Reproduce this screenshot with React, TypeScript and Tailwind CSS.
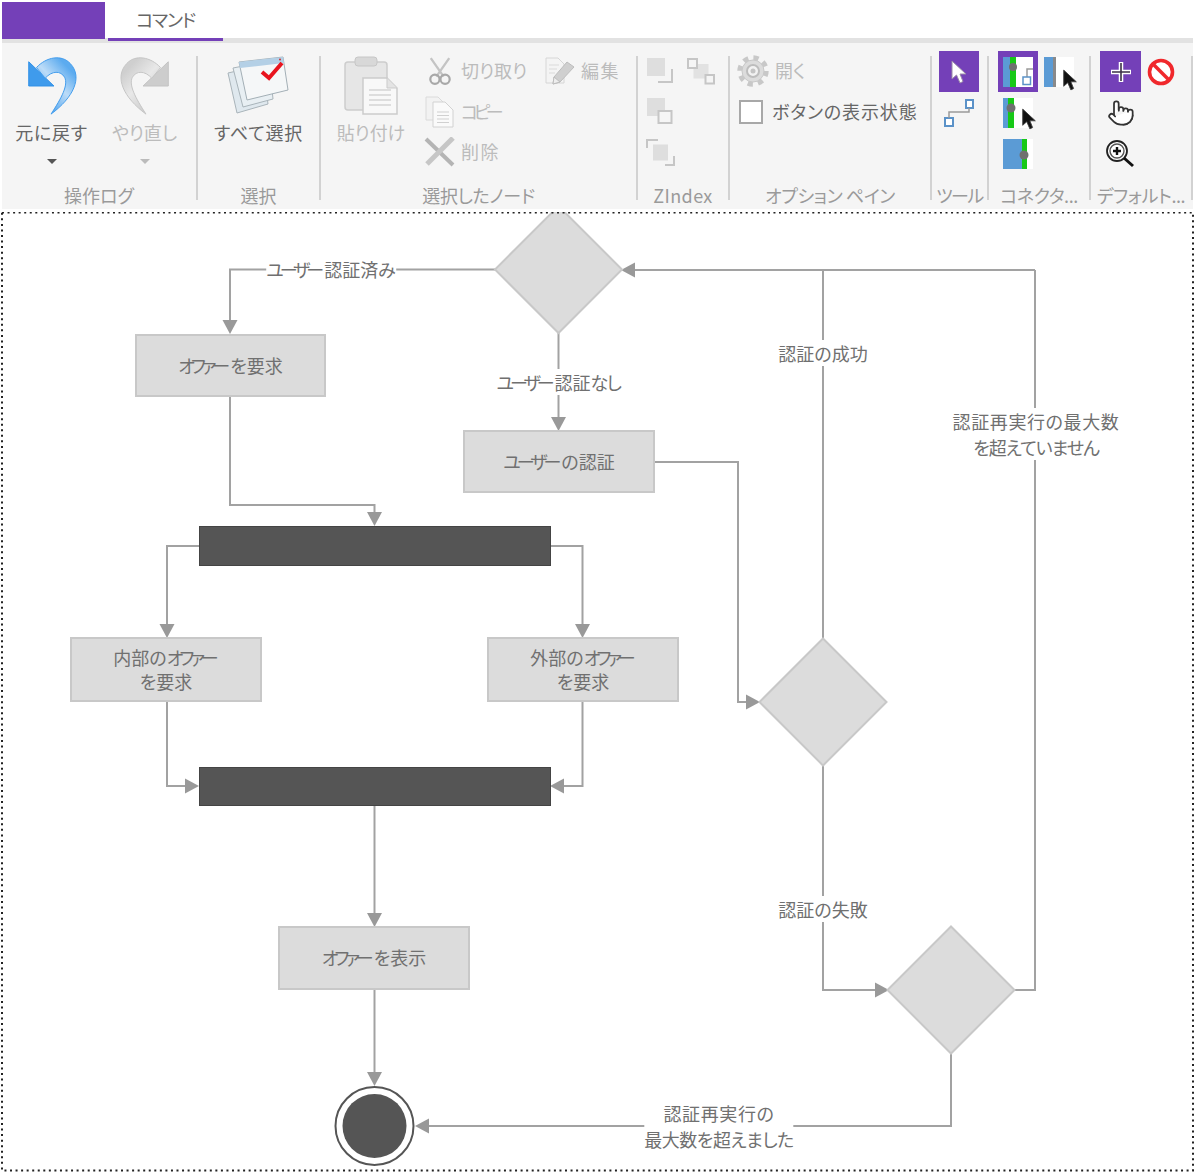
import type { ReactNode } from "react";
import { Pointer } from "lucide-react";

const PURPLE = "bg-[#7440b8]";

function Sep() {
  return <div className="w-[2px] h-[144px] mt-[13px] bg-[#d2d2d2] shrink-0" />;
}

function Group({ label, className, labelClass = "", children }: { label: string; className: string; labelClass?: string; children: ReactNode }) {
  return (
    <div className={`flex flex-col shrink-0 ${className}`}>
      <div className="flex-1 min-h-0">{children}</div>
      <div className={`h-[28px] leading-[28px] text-[18px] text-[#9a9a9a] text-center whitespace-nowrap overflow-hidden ${labelClass}`}>{label}</div>
    </div>
  );
}

function Arc({ gray }: { gray?: boolean }) {
  const id = gray ? "arcGray" : "arcBlue";
  return (
    <svg width="60" height="64" viewBox="-2 0 60 66" className={gray ? "-scale-x-100" : ""}>
      <defs>
        <linearGradient id={id} x1="0.1" y1="0.9" x2="0.7" y2="0.1">
          <stop offset="0" stopColor={gray ? "#c4c4c4" : "#3b98ea"} />
          <stop offset="0.6" stopColor={gray ? "#e8e8e8" : "#bcdcf8"} />
          <stop offset="1" stopColor={gray ? "#cfcfcf" : "#5cabef"} />
        </linearGradient>
      </defs>
      <path d="M4 8 V33 H30 Z" fill={gray ? "#cdcdcd" : "#3f9bec"} stroke={gray ? "#c2c2c2" : "#2f8fe6"} />
      <path
        d="M12 14 C22 3 38 0 47 10 C60 24 50 45 27 62 C38 45 45 32 41 24 C37 17 28 17 21 25 Z"
        fill={`url(#${id})`}
        stroke={gray ? "#c4c4c4" : "#3f9bec"}
      />
    </svg>
  );
}

function SelectAllIcon() {
  return (
    <svg width="64" height="64" viewBox="2 0 64 64">
      <polygon points="3,19 38,11 43,50 12,59" fill="#dfe8ee" stroke="#a9b4ba" />
      <polygon points="8,14 44,7 48,45 18,53" fill="#e8eff3" stroke="#a9b4ba" />
      <polygon points="14,8 58,3 63,36 22,46" fill="#f5f7f8" stroke="#a3afb6" />
      <polygon points="14,8 58,3 59,9 15,14" fill="#b4d0e6" />
      <circle cx="55" cy="5.5" r="1" fill="#c33" />
      <path d="M37 18 L44 24 L57 9" fill="none" stroke="#e8141e" strokeWidth="4" />
    </svg>
  );
}

function PasteIcon() {
  return (
    <svg width="56" height="64" viewBox="0 0 56 64">
      <rect x="2" y="8" width="42" height="48" rx="3" fill="#e6e6e6" stroke="#cdcdcd" strokeWidth="1.5" />
      <rect x="12" y="3" width="22" height="9" rx="3" fill="#d8d8d8" stroke="#c6c6c6" />
      <path d="M20 24 H44 L54 34 V60 H20 Z" fill="#f8f8f8" stroke="#cbcbcb" strokeWidth="1.5" />
      <path d="M44 24 V34 H54" fill="#e4e4e4" stroke="#cbcbcb" />
      <path d="M26 36 H48 M26 41 H48 M26 46 H48 M26 51 H48" stroke="#d4d4d4" strokeWidth="1.5" />
    </svg>
  );
}

function CutIcon() {
  return (
    <svg width="24" height="32" viewBox="0 0 26 32" className="-ml-[3px]">
      <path d="M3 2 L17 22 M23 2 L9 22" stroke="#c4c4c4" strokeWidth="2.5" fill="none" />
      <circle cx="7.5" cy="25" r="5" fill="none" stroke="#a8a8a8" strokeWidth="2.4" />
      <circle cx="18.5" cy="25" r="5" fill="none" stroke="#a8a8a8" strokeWidth="2.4" />
    </svg>
  );
}

function CopyIcon() {
  return (
    <svg width="30" height="32" viewBox="0 0 30 32" className="-ml-[3px]">
      <path d="M1 1 H13 L19 7 V24 H1 Z" fill="#f2f2f2" stroke="#dadada" />
      <path d="M8 6 H20 L28 14 V31 H8 Z" fill="#fafafa" stroke="#d2d2d2" />
      <path d="M12 16 H24 M12 19.5 H24 M12 23 H24 M12 26.5 H24" stroke="#d0d0d0" />
    </svg>
  );
}

function DeleteIcon() {
  return (
    <svg width="32" height="30" viewBox="0 0 32 30" className="-ml-[3px]">
      <path d="M2 2 L29 28" stroke="#b4b4b4" strokeWidth="4" />
      <path d="M29 1 L3 27" stroke="#c6c6c6" strokeWidth="5" />
    </svg>
  );
}

function EditIcon() {
  return (
    <svg width="30" height="30" viewBox="0 0 30 30" className="-ml-[3px]">
      <path d="M1 2 H13 L19 8 V27 H1 Z" fill="#f4f4f4" stroke="#d6d6d6" />
      <path d="M4 9 H14 M4 13 H12 M4 17 H10" stroke="#dadada" />
      <path d="M9 21 L22 6 L29 11 L15 26 L8 28 Z" fill="#cfcfcf" stroke="#bdbdbd" />
      <path d="M9 21 L15 26 L8 28 Z" fill="#eeeeee" stroke="#bdbdbd" />
    </svg>
  );
}

function ZIcon({ n }: { n: number }) {
  const line = { fill: "none", stroke: "#c6c6c6", strokeWidth: 2 };
  return (
    <svg width="40" height="40" viewBox="0 0 40 40">
      {n === 1 && (
        <>
          <rect x="8" y="8" width="18" height="18" fill="#dedede" />
          <path d="M19 32 H33 V19" {...line} />
        </>
      )}
      {n === 2 && (
        <>
          <rect x="12.5" y="14" width="15" height="14.5" fill="#e2e2e2" />
          <rect x="7" y="9" width="9" height="9" fill="#f5f5f5" stroke="#c6c6c6" strokeWidth="2" />
          <rect x="24.5" y="25" width="8.5" height="8.5" fill="#f5f5f5" stroke="#c6c6c6" strokeWidth="2" />
        </>
      )}
      {n === 3 && (
        <>
          <rect x="8" y="7" width="18" height="18" fill="#dedede" />
          <rect x="19.5" y="20" width="13" height="12" fill="#f5f5f5" stroke="#c6c6c6" strokeWidth="2" />
        </>
      )}
      {n === 4 && (
        <>
          <path d="M8 16 V8 H19" {...line} />
          <rect x="14" y="12.5" width="15" height="16" fill="#dedede" />
          <path d="M26 33 H35 V24" {...line} />
        </>
      )}
    </svg>
  );
}

function GearIcon() {
  return (
    <svg width="32" height="32" viewBox="0 0 32 32">
      <circle cx="16" cy="16" r="13.2" fill="none" stroke="#c8c8c8" strokeWidth="5" strokeDasharray="5.2 5.17" />
      <circle cx="16" cy="16" r="11" fill="#dcdcdc" stroke="#c8c8c8" />
      <circle cx="16" cy="16" r="6" fill="#f2f2f2" stroke="#bdbdbd" strokeWidth="2" />
      <circle cx="16" cy="16" r="2.5" fill="#c4c4c4" />
    </svg>
  );
}

function Cursor({ light }: { light?: boolean }) {
  return (
    <svg width="20" height="24" viewBox="0 0 20 24">
      <path
        d="M3 1 V19 L7.5 15 L11 23 L14 21.5 L11 14 H17 Z"
        fill={light ? "#ffffff" : "#111111"}
        stroke={light ? "#9a8aa8" : "#444444"}
        strokeWidth="1"
      />
    </svg>
  );
}

function ConnectorToolIcon() {
  return (
    <svg width="32" height="32" viewBox="0 0 32 32">
      <rect x="2" y="21" width="8" height="8" fill="#ffffff" stroke="#5b92c8" strokeWidth="2" />
      <rect x="23" y="3" width="7" height="8" fill="#ffffff" stroke="#5b92c8" strokeWidth="2" />
      <path d="M6 21 V15 H26 V11" fill="none" stroke="#9a9a9a" strokeWidth="1.5" />
    </svg>
  );
}

function ConnA() {
  return (
    <svg width="30" height="30" viewBox="0 0 30 30">
      <rect width="30" height="30" fill="#ffffff" />
      <rect width="7" height="30" fill="#5b9bd5" />
      <rect x="7" width="6" height="30" fill="#17c917" />
      <circle cx="10" cy="10" r="4" fill="#707070" />
      <path d="M24 20 V12 H30" fill="none" stroke="#9a9a9a" strokeWidth="1.5" />
      <rect x="20" y="20" width="7.5" height="7.5" fill="#ffffff" stroke="#5b92c8" strokeWidth="1.5" />
    </svg>
  );
}

function ConnB() {
  return (
    <div className="relative w-[30px] h-[30px] flex bg-white">
      <div className="w-[9px] bg-[#5b9bd5]" />
      <div className="w-[3px] bg-[#8a8a8a]" />
      <div className="absolute left-[16px] top-[11px] scale-90">
        <Cursor />
      </div>
    </div>
  );
}

function ConnC() {
  return (
    <div className="relative w-[30px] h-[30px] bg-white">
      <svg width="30" height="30" viewBox="0 0 30 30" className="absolute left-0 top-0">
        <rect width="5" height="30" fill="#5b9bd5" />
        <rect x="5" width="6" height="30" fill="#17c917" />
        <circle cx="8" cy="10" r="4.5" fill="#707070" />
      </svg>
      <div className="absolute left-[16px] top-[9px] scale-90">
        <Cursor />
      </div>
    </div>
  );
}

function ConnD() {
  return (
    <svg width="30" height="30" viewBox="0 0 30 30">
      <rect width="30" height="30" fill="#ffffff" />
      <rect width="19" height="30" fill="#5b9bd5" />
      <rect x="19" width="5" height="30" fill="#17c917" />
      <circle cx="21" cy="16" r="4.5" fill="#707070" />
    </svg>
  );
}

function PlusIcon() {
  return (
    <svg width="24" height="24" viewBox="0 0 24 24">
      <path d="M12 2 V22 M2 12 H22" stroke="#ffffff" strokeWidth="4.5" />
      <path d="M12 3 V21 M3 12 H21" stroke="#3c3048" strokeWidth="1.6" />
    </svg>
  );
}

function NoIcon() {
  return (
    <svg width="28" height="28" viewBox="0 0 28 28">
      <circle cx="14" cy="14" r="11.5" fill="#ffffff" stroke="#f0282c" strokeWidth="3.6" />
      <path d="M6 6 L22 22" stroke="#f0282c" strokeWidth="3.6" />
    </svg>
  );
}

function ZoomIcon() {
  return (
    <svg width="30" height="30" viewBox="0 0 30 30" className="-ml-[2px]">
      <circle cx="12" cy="12" r="10" fill="#ffffff" stroke="#222222" strokeWidth="1.8" />
      <circle cx="12" cy="12" r="7" fill="#ffffff" stroke="#555555" strokeWidth="1.4" />
      <path d="M12 8 V16 M8 12 H16" stroke="#111111" strokeWidth="2.4" />
      <path d="M19 19 L28 27" stroke="#111111" strokeWidth="3" />
    </svg>
  );
}

function IconCell({ active, children, className = "w-[40px]" }: { active?: boolean; children: ReactNode; className?: string }) {
  return (
    <div className={`h-[41px] flex items-center justify-center shrink-0 ${className} ${active ? PURPLE : ""}`}>{children}</div>
  );
}

function Caret({ gray }: { gray?: boolean }) {
  return <div className={`w-0 h-0 border-x-[5px] border-x-transparent border-t-[5px] ${gray ? "border-t-[#bbbbbb]" : "border-t-[#555555]"}`} />;
}

function LargeButton({ icon, text, gray, caret, width, textClass = "" }: { icon: ReactNode; text: string; gray?: boolean; caret?: boolean; width: string; textClass?: string }) {
  return (
    <div className={`flex flex-col items-center pt-[11px] ${width}`}>
      <div className="h-[64px] flex items-center justify-center">{icon}</div>
      <div className={`mt-[1px] h-[26px] leading-[26px] text-[18px] whitespace-nowrap ${textClass} ${gray ? "text-[#bcbcbc]" : "text-[#666666]"}`}>{text}</div>
      {caret && (
        <div className="mt-[14px]">
          <Caret gray={gray} />
        </div>
      )}
    </div>
  );
}

function SmallAction({ icon, text, className, textClass = "" }: { icon: ReactNode; text: string; className: string; textClass?: string }) {
  return (
    <div className={`h-[41px] flex items-center ${className}`}>
      <div className="w-[39px] flex justify-center shrink-0">{icon}</div>
      <span className={`text-[18px] leading-[26px] pb-[2px] text-[#bcbcbc] whitespace-nowrap ${textClass}`}>{text}</span>
    </div>
  );
}

function Ribbon() {
  return (
    <div className="ml-[2px] w-[1191px] h-[212px] bg-white">
      <div className="flex h-[38px] pt-[2px]">
        <div className={`w-[103px] h-[37px] ${PURPLE}`} />
        <div className="ml-[3px] w-[115px] h-[34px] leading-[34px] text-center text-[18px] tracking-[-1.2px] text-[#666666]">コマンド</div>
      </div>
      <div className="h-[5px] bg-[#e2e2e2]">
        <div className={`ml-[106px] w-[115px] h-[3px] ${PURPLE}`} />
      </div>
      <div className="flex h-[166px] bg-[#f5f5f5]">
        <Group label="操作ログ" className="w-[194px]">
          <div className="flex pl-[3px]">
            <LargeButton width="w-[93px]" icon={<Arc />} text="元に戻す" textClass="tracking-[0.7px]" caret />
            <LargeButton width="w-[93px]" icon={<Arc gray />} text="やり直し" gray caret />
          </div>
        </Group>
        <Sep />
        <Group label="選択" className="w-[121px]">
          <LargeButton width="w-full" icon={<SelectAllIcon />} text="すべて選択" textClass="tracking-[0.8px]" />
        </Group>
        <Sep />
        <Group label="選択したノード" className="w-[315px]" labelClass="tracking-[-0.3px]">
          <div className="flex pl-[5px]">
            <LargeButton width="w-[90px]" icon={<PasteIcon />} text="貼り付け" gray />
            <div className="pt-[7px] ml-[6px]">
              <div className="flex">
                <SmallAction icon={<CutIcon />} text="切り取り" className="w-[120px]" />
                <SmallAction icon={<EditIcon />} text="編集" className="w-[80px]" textClass="tracking-[1.5px]" />
              </div>
              <SmallAction icon={<CopyIcon />} text="コピー" className="w-[120px]" textClass="tracking-[-4.5px]" />
              <SmallAction icon={<DeleteIcon />} text="削除" className="w-[120px] -mt-[1px]" textClass="tracking-[1.5px]" />
            </div>
          </div>
        </Group>
        <Sep />
        <Group label="ZIndex" className="w-[90px]" labelClass="tracking-[0.4px]">
          <div className="grid grid-cols-[42px_42px] pl-[1px] pt-[6px]">
            <IconCell><ZIcon n={1} /></IconCell>
            <IconCell><ZIcon n={2} /></IconCell>
            <IconCell><ZIcon n={3} /></IconCell>
            <div />
            <IconCell><ZIcon n={4} /></IconCell>
          </div>
        </Group>
        <Sep />
        <Group label="オプション ペイン" className="w-[200px]" labelClass="tracking-[-0.4px]">
          <div className="pt-[7px] pl-[7px]">
            <div className="h-[41px] flex items-center gap-[6px]">
              <GearIcon />
              <span className="text-[18px] leading-[26px] pb-[2px] text-[#bcbcbc]">開く</span>
            </div>
            <div className="h-[41px] flex items-center gap-[9px] ml-[2px]">
              <div className="w-[24px] h-[24px] bg-white border-2 border-[#a8a8a8]" />
              <span className="text-[18px] leading-[26px] pb-[2px] tracking-[0.9px] text-[#666666] whitespace-nowrap">ボタンの表示状態</span>
            </div>
          </div>
        </Group>
        <Sep />
        <Group label="ツール" className="w-[55px]" labelClass="tracking-[-1.5px]">
          <div className="pt-[8px] pl-[7px]">
            <IconCell active><Cursor light /></IconCell>
            <IconCell><ConnectorToolIcon /></IconCell>
          </div>
        </Group>
        <Sep />
        <Group label="コネクタ..." className="w-[100px]" labelClass="tracking-[-0.4px]">
          <div className="pt-[8px] pl-[9px]">
            <div className="flex">
              <IconCell active><ConnA /></IconCell>
              <div className="w-[6px]" />
              <IconCell className="w-[30px]"><ConnB /></IconCell>
            </div>
            <IconCell><ConnC /></IconCell>
            <IconCell><ConnD /></IconCell>
          </div>
        </Group>
        <Sep />
        <Group label="デフォルト..." className="w-[100px]" labelClass="tracking-[-0.4px]">
          <div className="pt-[8px] pl-[9px]">
            <div className="flex">
              <IconCell active className="w-[41px]"><PlusIcon /></IconCell>
              <IconCell><NoIcon /></IconCell>
            </div>
            <IconCell className="w-[41px]">
              <Pointer size={28} color="#333333" fill="#ffffff" strokeWidth={1.5} />
            </IconCell>
            <IconCell className="w-[41px]"><ZoomIcon /></IconCell>
          </div>
        </Group>
        <Sep />
      </div>
    </div>
  );
}

const EDGES = [
  "M495 269.5 H230 V324",
  "M558.5 332 V421",
  "M230 396 V505 H374.5 V516",
  "M199 546 H167 V628",
  "M550 546 H582.5 V628",
  "M654 462 H738 V702 H750",
  "M167 701 V786 H189",
  "M582.5 701 V786 H560",
  "M374.5 805 V917",
  "M374.5 989 V1076",
  "M823 639 V270",
  "M1035 270 H631",
  "M1013 990 H1035 V270",
  "M823 765 V990 H879",
  "M951 1053 V1126 H425",
];

const ARROWS = [
  "230,334 222.5,320 237.5,320",
  "558.5,431 551,417 566,417",
  "374.5,526 367,512 382,512",
  "167,638 159.5,624 174.5,624",
  "582.5,638 575,624 590,624",
  "374.5,927 367,913 382,913",
  "374.5,1086 367,1072 382,1072",
  "760,702 746,694.5 746,709.5",
  "199,786 185,778.5 185,793.5",
  "889,990 875,982.5 875,997.5",
  "550,786 564,778.5 564,793.5",
  "621,270 635,262.5 635,277.5",
  "415,1126 429,1118.5 429,1133.5",
];

const DIAMONDS = [
  [558.5, 269.5],
  [823, 702],
  [951, 990],
];

// Meiryo UI sets kana narrow; Noto needs them pulled in. The closing ー stays outside so it doesn't run into the next kanji.
function Kana({ children }: { children: ReactNode }) {
  return <span className="tracking-[-4px]">{children}</span>;
}

function Node({ className, children }: { className: string; children: ReactNode }) {
  return (
    <div
      className={`absolute flex items-center justify-center pb-[2px] text-center text-[18px] leading-[24px] text-[#707070] bg-[#dcdcdc] border-2 border-[#c8c8c8] ${className}`}
    >
      <div>{children}</div>
    </div>
  );
}

function EdgeLabel({ className, children }: { className: string; children: ReactNode }) {
  return (
    <div
      className={`absolute -translate-x-1/2 -translate-y-1/2 bg-white text-center text-[18px] leading-[26px] text-[#707070] whitespace-nowrap ${className}`}
    >
      {children}
    </div>
  );
}

function Line({ className, children }: { className: string; children: ReactNode }) {
  return <div className={className}>{children}</div>;
}

function Diagram() {
  return (
    <div className="relative h-[964px] overflow-hidden bg-white">
      <svg width="1200" height="964" viewBox="0 212 1200 964" className="absolute left-0 top-0">
        {EDGES.map((d) => (
          <path key={d} d={d} fill="none" stroke="#a2a2a2" strokeWidth="2" />
        ))}
        {ARROWS.map((p) => (
          <polygon key={p} points={p} fill="#999999" />
        ))}
        {DIAMONDS.map(([cx, cy]) => (
          <polygon
            key={cx}
            points={`${cx},${cy - 63.5} ${cx + 63.5},${cy} ${cx},${cy + 63.5} ${cx - 63.5},${cy}`}
            fill="#dcdcdc"
            stroke="#c8c8c8"
            strokeWidth="2"
          />
        ))}
        <circle cx="374.5" cy="1126" r="39" fill="#ffffff" stroke="#555555" strokeWidth="2" />
        <circle cx="374.5" cy="1126" r="32" fill="#555555" />
        <rect x="2" y="212.5" width="1191" height="958" fill="none" stroke="#222222" strokeWidth="2" strokeDasharray="2 3.55" />
      </svg>

      <Node className="left-[135px] top-[122px] w-[191px] h-[63px]"><Kana>オファ</Kana>ーを要求</Node>
      <Node className="left-[463px] top-[218px] w-[192px] h-[63px]"><Kana>ユーザ</Kana>ーの認証</Node>
      <Node className="left-[70px] top-[425px] w-[192px] h-[65px]">内部の<Kana>オファ</Kana>ー<br />を要求</Node>
      <Node className="left-[487px] top-[425px] w-[192px] h-[65px]">外部の<Kana>オファ</Kana>ー<br />を要求</Node>
      <Node className="left-[278px] top-[714px] w-[192px] h-[64px]"><Kana>オファ</Kana>ーを表示</Node>
      <div className="absolute left-[199px] top-[314px] w-[352px] h-[40px] bg-[#555555] border border-[#444444]" />
      <div className="absolute left-[199px] top-[555px] w-[352px] h-[39px] bg-[#555555] border border-[#444444]" />

      <EdgeLabel className="left-[331px] top-[57px]"><Kana>ユーザ</Kana>ー認証済み</EdgeLabel>
      <EdgeLabel className="left-[558.5px] top-[170px]"><Kana>ユーザ</Kana>ー認証<span className="tracking-[-1.5px]">なし</span></EdgeLabel>
      <EdgeLabel className="left-[823px] top-[141px]">認証の成功</EdgeLabel>
      <EdgeLabel className="left-[1036px] top-[222px]">
        <Line className="tracking-[0.6px]">認証再実行の最大数</Line>
        <Line className="tracking-[-1px]">を超えていません</Line>
      </EdgeLabel>
      <EdgeLabel className="left-[823px] top-[697px]">認証の失敗</EdgeLabel>
      <EdgeLabel className="left-[719px] top-[914px]">
        <Line className="tracking-[0.6px]">認証再実行の</Line>
        <Line className="tracking-[-0.5px]">最大数を超えました</Line>
      </EdgeLabel>
    </div>
  );
}

export default function App() {
  return (
    <div className="w-[1200px] h-[1176px] overflow-hidden bg-white font-['Noto_Sans_CJK_JP','Noto_Sans',sans-serif] [font-feature-settings:'palt']">
      <Ribbon />
      <Diagram />
    </div>
  );
}
